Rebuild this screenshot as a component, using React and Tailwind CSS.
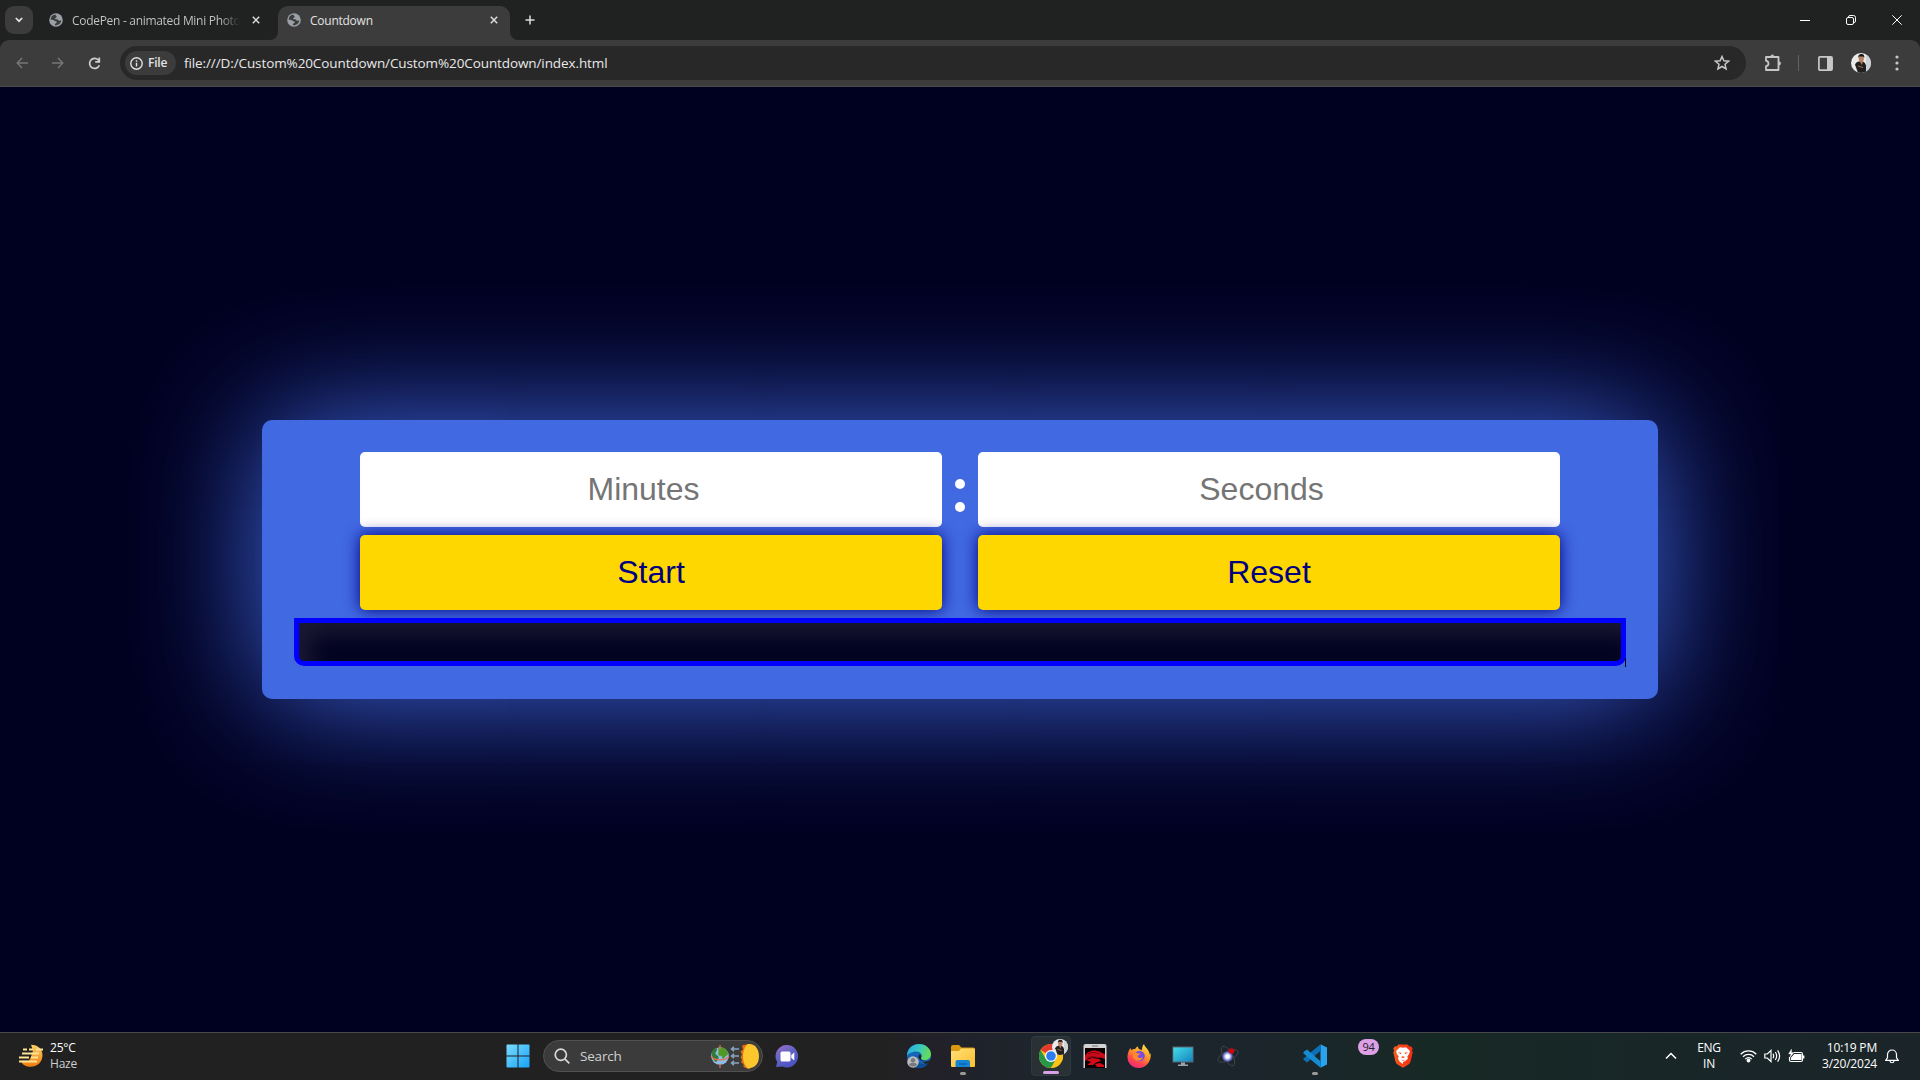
import React from "react";

const Globe = () => (
  <svg width="14" height="14" viewBox="0 0 14 14" className="shrink-0">
    <circle cx="7" cy="7" r="6.8" fill="#9aa0a6" />
    <path d="M6.4 1.6C3.6 1.8 1.7 4 1.6 6.6L4.2 7c1 .3 1.4 1.2 2.6 1.3 1 .1 1.2 1 .6 1.6-.5.5-1.300.4-1.500 1.200l.1 1.200c3.500.3 6-1.900 6.300-4.700-.8-.2-1.200.4-2.200.1C9 7.300 9 6.400 7.800 6.300 6.600 6.200 5.900 6 6 5.200c.1-.7 1.500-.4 1.700-1.300.1-.9-1.300-.9-1.300-2.300z" fill="#3c3c3c" />
  </svg>
);

const Cross = () => (
  <svg width="8" height="8" viewBox="0 0 8 8" className="shrink-0" fill="none" stroke="#dcdcdc" strokeWidth="1.5">
    <path d="M.8.8l6.400 6.400M7.200.8L.8 7.200" />
  </svg>
);

const Avatar = ({ size }) => (
  <svg width={size} height={size} viewBox="0 0 20 20" className="shrink-0">
    <defs>
      <clipPath id="avatarClip"><circle cx="10" cy="10" r="10" /></clipPath>
    </defs>
    <g clipPath="url(#avatarClip)">
      <rect width="20" height="20" fill="#e9eaec" />
      <rect x="15" width="5" height="20" fill="#cfd3d6" />
      <path d="M4 11.500c1-2.500 3-3 5.500-3.300 3 .2 4.500 1 5.500 4.300L15 20H7z" fill="#22211f" />
      <path d="M8.500 8h3.300l-.8 4z" fill="#b98361" />
      <ellipse cx="10.300" cy="5.600" rx="2.600" ry="3.500" fill="#b98361" />
      <path d="M7.400 5C7 1.800 8.800 1 10.600 1s3.200 1.300 2.600 4l-1-1.600H8.300z" fill="#1b1512" />
      <path d="M7 13l5 1.500" stroke="#9a6a4c" strokeWidth="1.200" />
    </g>
  </svg>
);

function TabStrip() {
  return (
    <div className="flex h-10 w-full items-start bg-[#202221]">
      <div className="ml-[5px] mt-1.5 flex h-7 w-7 items-center justify-center rounded-[9px] bg-[#3c3c3c] pl-0 pr-0">
        <svg width="8" height="6" viewBox="0 0 8 6" fill="none" stroke="#e3e3e3" strokeWidth="1.700"><path d="M.8 1L4 4.200 7.200 1" /></svg>
      </div>
      <div className="ml-[16px] flex h-10 w-[229px] items-center">
        <Globe />
        <span className="ml-[9px] mt-px w-[168px] overflow-hidden whitespace-nowrap bg-gradient-to-r from-[#c7c7c7] from-88% to-transparent bg-clip-text text-[12px] leading-4 tracking-[-0.300px] text-transparent">CodePen - animated Mini Photo</span>
        <span className="ml-[12px] flex"><Cross /></span>
      </div>
      <div className="relative mt-1.5 flex h-[34px] w-[232px] items-center rounded-t-[10px] bg-[#3c3c3c] pb-[6px] pl-[9px] pt-0">
        <svg className="absolute -left-2 bottom-0" width="8" height="8"><path d="M8 0v8H0a8 8 0 0 0 8-8z" fill="#3c3c3c" /></svg>
        <svg className="absolute -right-2 bottom-0" width="8" height="8"><path d="M0 0v8h8a8 8 0 0 1-8-8z" fill="#3c3c3c" /></svg>
        <Globe />
        <span className="ml-[9px] mt-[2px] w-[180px] text-[12px] leading-4 tracking-[-0.25px] text-[#e3e3e3]">Countdown</span>
        <Cross />
      </div>
      <svg className="ml-[15px] mt-[15px]" width="10" height="10" viewBox="0 0 10 10" fill="none" stroke="#dcdcdc" strokeWidth="1.500"><path d="M5 .5v9M.5 5h9" /></svg>
      <div className="ml-auto mt-[15px] flex items-center gap-[36px] pr-[18px]">
        <svg width="10" height="10" fill="none" stroke="#fff"><path d="M0 5.500h10" /></svg>
        <svg width="10" height="10" fill="none" stroke="#fff"><rect x=".5" y="2.500" width="7" height="7" rx="1.500" /><path d="M2.500 2Q2.500.5 4 .5h3.500q2 0 2 2V6q0 1.500-1.500 1.500" /></svg>
        <svg width="10" height="10" fill="none" stroke="#fff"><path d="M.3.3l9.400 9.400M9.700.3L.3 9.700" /></svg>
      </div>
    </div>
  );
}

function Toolbar() {
  return (
    <div className="h-[47px] w-full bg-[#202221]">
      <div className="flex h-[47px] w-full items-center rounded-t-[9px] border-b border-[#4a4a4a] bg-[#3c3c3c] pl-4">
        <svg width="13" height="12" viewBox="0 0 13 12" fill="none" stroke="#757575" strokeWidth="1.500"><path d="M12 6H1.500M6 1L1.200 6 6 11" /></svg>
        <svg className="ml-[23px]" width="13" height="12" viewBox="0 0 13 12" fill="none" stroke="#757575" strokeWidth="1.500"><path d="M0 6h10.500M6 1l4.800 5L6 11" /></svg>
        <svg className="ml-[23px]" width="13" height="13" viewBox="0 0 13 13" fill="none" stroke="#d0d0d0" strokeWidth="1.700"><path d="M11.300 8.200A5 5 0 1 1 10.300 3L11.500 4.500" /><path d="M11.300.500v4.300H7.200" /></svg>
        <div className="ml-[19px] flex h-[34px] w-[1626px] items-center rounded-full bg-[#282828] pl-[5px]">
          <div className="flex h-6 w-[51px] shrink-0 items-center rounded-full bg-[#3c3c3c] pl-[5px]">
            <svg width="13" height="13" viewBox="0 0 13 13" fill="none" stroke="#e3e3e3" strokeWidth="1.400"><circle cx="6.500" cy="6.500" r="5.700" /><path d="M6.500 5.800v3.700M6.500 3.300v1.500" /></svg>
            <span className="ml-[5px] text-[12px] font-semibold leading-4 tracking-[-0.2px] text-[#e3e3e3]">File</span>
          </div>
          <span className="ml-[8px] whitespace-nowrap text-[13.500px] leading-5 tracking-[-0.1px] text-[#e8e8e8]">file:///D:/Custom%20Countdown/Custom%20Countdown/index.html</span>
          <svg className="ml-auto mr-4" width="16" height="16" viewBox="0 0 16 16" fill="none" stroke="#c7c7c7" strokeWidth="1.500"><path d="M8 1.500l1.900 4.300 4.700.4L11 9.300l1.100 4.700L8 11.500 3.900 14 5 9.300 1.400 6.200l4.700-.4z" /></svg>
        </div>
        <svg className="ml-[18px]" width="18" height="18" viewBox="0 0 18 18" fill="none" stroke="#c7c7c7" strokeWidth="1.800" strokeLinejoin="round"><path d="M2 3h12.500v13H2v-3.800c3.300-.4 3.300-5 0-5.400z" /><path d="M6.700 2.500a1.600 1.600 0 0 1 3.200 0zM15 7.800a1.600 1.600 0 0 1 0 3.200z" fill="#c7c7c7" strokeWidth=".8" /></svg>
        <div className="ml-[16px] h-4 w-px bg-[#626262]" />
        <svg className="ml-[19px]" width="15" height="15" viewBox="0 0 15 15"><rect x=".9" y=".9" width="13.200" height="13.200" rx="1" fill="none" stroke="#c7c7c7" strokeWidth="1.700" /><path d="M9 1h5v13H9z" fill="#c7c7c7" /></svg>
        <div className="ml-[18px] flex"><Avatar size={20} /></div>
        <svg className="ml-[24px]" width="4" height="16" viewBox="0 0 4 16" fill="#c7c7c7"><circle cx="2" cy="2" r="1.600" /><circle cx="2" cy="8" r="1.600" /><circle cx="2" cy="14" r="1.600" /></svg>
      </div>
    </div>
  );
}

function Timer() {
  return (
    <main className="flex h-[945px] w-full items-start justify-center overflow-hidden bg-[#000020] pt-[333px] font-['Liberation_Sans',Arial,sans-serif] text-[32px]">
      <section className="h-[279px] w-[1396px] rounded-[10px] bg-[#4169e1] px-8 pt-8 shadow-[0_0_128px_#4169e1]">
        <div className="grid grid-cols-[582px_36px_582px] justify-center gap-y-2">
          <div className="flex h-[75px] items-center justify-center rounded-[5px] bg-white pb-[2px] pr-[15px] text-[#757575]">Minutes</div>
          <div className="flex flex-col items-center gap-[13px] pt-[27px]">
            <span className="h-[10px] w-[10px] rounded-full bg-white" />
            <span className="h-[10px] w-[10px] rounded-full bg-white" />
          </div>
          <div className="flex h-[75px] items-center justify-center rounded-[5px] bg-white pb-[2px] pr-[15px] text-[#757575]">Seconds</div>
          <button className="h-[75px] rounded-[5px] bg-[#ffd700] pb-[2px] text-[#000080] shadow-[0_0_16px_#000080]">Start</button>
          <span />
          <button className="h-[75px] rounded-[5px] bg-[#ffd700] pb-[2px] text-[#000080] shadow-[0_0_16px_#000080]">Reset</button>
        </div>
        <div className="relative mt-2 h-12 w-full">
          <div className="h-12 w-full rounded-b-[10px] border-[5px] border-[#0000ff] bg-[#000020] shadow-[inset_12px_12px_24px_#1a1a34]" />
          <span className="absolute -bottom-px right-0 h-[9px] w-px bg-black" />
        </div>
      </section>
    </main>
  );
}

const Slot = ({ w, dot, children }) => (
  <div className={"relative flex h-[47px] shrink-0 items-center justify-center " + w}>
    {children}
    {dot && <span className="absolute bottom-[5px] h-[3px] w-[6px] rounded-full bg-[#9a9a9a]" />}
  </div>
);

const Win = () => (
  <svg width="24" height="24" viewBox="0 0 24 24">
    <defs><linearGradient id="win" x1="0" y1="0" x2="1" y2="1" gradientUnits="objectBoundingBox"><stop stopColor="#7bdcff" /><stop offset="1" stopColor="#17a2f8" /></linearGradient></defs>
    <path d="M1 .5h10.500V11.500H.5V1zM12.500.5H23l.5.5v10.500h-11zM.5 12.500h11v11H1l-.5-.5zM12.500 12.500h11V23l-.5.5H12.500z" fill="url(#win)" />
  </svg>
);

const SearchArt = () => (
  <svg width="52" height="29" viewBox="0 0 52 29">
    <circle cx="10" cy="14" r="8.800" fill="#8ebce4" />
    <path d="M9 5.500c4-1 8 1.500 9 5.500 0 3-2 2-3.500 4.500s-2 1-2.700-1c-.5-1.500-2.300 0-3.300-1.500S9.500 9 8 7z" fill="#4f9a25" />
    <path d="M2.500 9c1.500-2.500 3-3 4.500-2.500.5 2-1 2.500-1.500 4.500s2.500 2 3 4-1.500 4-2.500 5C2.500 17.500 1 12 2.500 9z" fill="#2f7a35" />
    <path d="M1 14.500c4 4.500 14 4.500 18 0M10 3v4.500M10 22v4" stroke="#ee6b4d" strokeWidth="1.200" fill="none" />
    <g stroke="#8aa5c0" strokeWidth="1.500" fill="none"><path d="M22 7h7M22 14h7M22 21h7M24 4.800L21.500 7 24 9.200M24 11.800L21.500 14l2.500 2.200M24 18.800L21.500 21l2.500 2.200" /></g>
    <path d="M38 2l-6 1.500 1 4-2.500 2 1.500 3-1.500 3 1.500 2-1 3 2.500 1.500v3l5 2 2-1V2z" fill="#e86f10" />
    <path d="M38 2c8-.5 11 6 11 12.500S45.500 26 38 26.500c-3.500-2.500-5-7.500-5-12.500s2-10 5-12z" fill="#fcc62d" />
  </svg>
);

const Chat = () => (
  <svg width="24" height="24" viewBox="0 0 24 24">
    <defs><linearGradient id="chat" x1="0" y1="0" x2="0.600" y2="1"><stop stopColor="#a06fc6" /><stop offset=".5" stopColor="#6264c4" /><stop offset="1" stopColor="#4a52c4" /></linearGradient></defs>
    <path d="M12 1a11.200 11.200 0 1 1-4.500 21.500L1 23l1.200-5A11.200 11.200 0 0 1 12 1z" fill="url(#chat)" />
    <rect x="5.500" y="7.500" width="10" height="10" rx="1.500" fill="#fff" /><path d="M16.300 11l3-2.500v8l-3-2.500z" fill="#fff" />
  </svg>
);

const Edge = () => (
  <svg width="26" height="26" viewBox="0 0 26 26">
    <defs>
      <linearGradient id="edgeA" x1="0" y1="0" x2="1" y2=".3"><stop stopColor="#28a8e8" /><stop offset=".5" stopColor="#35c6c6" /><stop offset="1" stopColor="#65da5c" /></linearGradient>
    </defs>
    <circle cx="13" cy="13" r="12" fill="#1565b8" />
    <path d="M16 18.500c3 .5 6 0 9-2v5l-3.500 1z" fill="#222223" />
    <path d="M1 13C1 5 7 1 13 1c7 0 12 5 12 10 0 4-3 6-6.500 6-3 0-4.500-1-3.500-2.500 2-3-1-6-4.500-6C5.500 8.500 1.500 11 1 13z" fill="url(#edgeA)" />
    <path d="M10 12c-2 5 3 9 8 9 2.500 0 4.500-1 5.500-2-3.500 5-9 7-13 5.500C5.500 22 6 14 10 12z" fill="#0c4c92" />
    <path d="M12.500 12.500c1-2 3.500-.5 2.800 1.500-.9 2 0 3.400 3.200 3.700-3 .8-6.800-1.500-6-5.200z" fill="#202124" />
    <circle cx="7" cy="19" r="5.800" fill="#b8babd" /><circle cx="7" cy="17.300" r="2.200" fill="#77797c" /><path d="M3 22c.5-3 7.500-3 8 0q-4 3-8 0z" fill="#77797c" />
  </svg>
);

const Folder = () => (
  <svg width="26" height="24" viewBox="0 0 26 24">
    <defs><linearGradient id="fold" x1="0" y1="0" x2="1" y2="1"><stop stopColor="#ffe07a" /><stop offset="1" stopColor="#fdbf2c" /></linearGradient></defs>
    <path d="M1 3q0-2 2-2h6l2.500 2.500H23q2 0 2 2V9H1z" fill="#d9980f" />
    <path d="M1 7h8l2-2.500h13q1 0 1 1V22q0 1-1 1H2q-1 0-1-1z" fill="url(#fold)" />
    <path d="M5.500 23v-5q0-2 2-2H18q2 0 2 2v5z" fill="#1584d2" /><path d="M9 20h8" stroke="#0a62ae" strokeWidth="1.300" />
  </svg>
);

const Chrome = () => (
  <svg width="24" height="24" viewBox="0 0 24 24">
    <circle cx="12" cy="12" r="12" fill="#fbc116" />
    <path d="M12 12L1.600 6A12 12 0 0 1 22.400 6H12z" fill="#e33b2e" />
    <path d="M1.600 6A12 12 0 0 0 12 24l5.200-9L12 12 6.800 15z" fill="#279847" />
    <path d="M12 24l5.200-9A6 6 0 0 0 17.200 9L16 6h6.400A12 12 0 0 1 12 24z" fill="#fbc116" />
    <circle cx="12" cy="12" r="6" fill="#fff" /><circle cx="12" cy="12" r="4.800" fill="#2e7df0" />
  </svg>
);

const RedPhone = () => (
  <svg width="24" height="24" viewBox="0 0 24 24">
    <rect x=".5" y="0" width="23" height="28" rx="2" fill="#d2d2d2" /><rect x="2" y="4" width="20" height="20" fill="#0c0102" />
    <path d="M2 12c2-4 7-6.500 12-5 4 .5 5 2.500 8 3v5l-4-1.500-4 .5-3-1-5 1-4 3z" fill="#c90a1a" />
    <path d="M3 16l6-2 7 1 2 2-5 1.500-3 2.500H4l4-3zM12 20l5-1 4 2v2h-7z" fill="#d40b1b" />
    <path d="M5 10c4-2 8-2 11 0M4 14c4-2 9-1 12 0" stroke="#7c0610" fill="none" /><path d="M9 2h6" stroke="#777" />
  </svg>
);

const Firefox = () => (
  <svg width="24" height="24" viewBox="0 0 24 24">
    <defs><linearGradient id="ff" x1=".8" y1="0" x2=".3" y2="1"><stop stopColor="#ffe843" /><stop offset=".45" stopColor="#ff9328" /><stop offset=".75" stopColor="#ff4450" /><stop offset="1" stopColor="#ef2b78" /></linearGradient></defs>
    <path d="M3.500 4c.2 1 .6 1.800 1 2.300C6 5 7 5 8 5.200 9 3.500 10 2.800 11 2.500c0 1.500.8 2.500 2 3L15 6c0-2.500.5-4.500 2-6 .5 3 3.500 4 5 8 .5 1 .8 2 .8 3l.7-2C25 17 19 24 12 24 5 24 0 19 .5 12 .8 8.500 2 6 3.500 4z" fill="url(#ff)" />
    <circle cx="12.500" cy="12" r="5.300" fill="#7b4be0" />
    <path d="M6 9c2-1 3-.5 4.500.3 1 .3 2 0 3 .3-.5 1.300-2.500 1.500-3 2.700.5 2 3.500 2.300 5.500 1-1 3-5 4.500-8 2.500-2-1.500-2.500-4-2-6.800z" fill="#ff8a2b" />
  </svg>
);

const Monitor = () => (
  <svg width="22" height="21" viewBox="0 0 22 21">
    <defs><linearGradient id="mon" x1="0" y1="0" x2="1" y2="1"><stop stopColor="#43dce8" /><stop offset="1" stopColor="#1783bd" /></linearGradient></defs>
    <rect x=".5" y=".5" width="21" height="16" fill="#56646f" /><rect x="1.300" y="1.500" width="19.400" height="14" fill="url(#mon)" />
    <path d="M9 16.500h4V18.500h3v1.500H6v-1.500h3z" fill="#9aa3a9" />
  </svg>
);

const Atom = () => (
  <svg width="24" height="24" viewBox="0 0 24 24" fill="none">
    <defs><radialGradient id="core"><stop offset=".3" stopColor="#fff" /><stop offset=".65" stopColor="#8c92de" /><stop offset="1" stopColor="#30376c" /></radialGradient></defs>
    <g stroke="#45494c" strokeWidth=".8"><ellipse cx="12" cy="12" rx="11" ry="4.500" transform="rotate(-25 12 12)" /><ellipse cx="12" cy="12" rx="11" ry="4.500" transform="rotate(60 12 12)" /></g>
    <circle cx="11.500" cy="12.500" r="5.500" fill="url(#core)" /><circle cx="15.500" cy="7" r="2.800" fill="#cf0610" />
  </svg>
);

const Code = () => (
  <svg width="25" height="24" viewBox="0 0 25 24">
    <path d="M17.500.3L24 3.500v17l-6.500 3.200z" fill="#27a3f0" />
    <path d="M17.500.3v6.500L4 18.500.5 15.700v-1.200z" fill="#0a71b8" />
    <path d="M17.500 23.700v-6.500L4 5.500.5 8v1.500z" fill="#168bd2" />
  </svg>
);

const Brave = () => (
  <svg width="20" height="24" viewBox="0 0 20 24">
    <defs><linearGradient id="brave"><stop stopColor="#f8591f" /><stop offset="1" stopColor="#f52e12" /></linearGradient></defs>
    <path d="M5.500.5h9l2 2 1.500-.3 1.700 2.300-.7 2 .7 2-2 8.500c-.5 2-1.500 3-3 4L10 23.800 5.300 21c-1.500-1-2.500-2-3-4l-2-8.500.7-2-.7-2L2 2.200l1.500.3z" fill="url(#brave)" />
    <path d="M10 3.800l3-.6 3.800 3.500-.5 3-2 2.800.7 2-2 2-3 1.600L10 20l-3.500-2.500L5 14.500l.7-2-2-2.800-.5-3L7 3.200z" fill="#fff" />
    <path d="M5 8.200l3.500.6-.8 1.400zM15 8.200l-3.500.6.8 1.400zM8 13l2-.8 2 .8-2 1.300zM7.500 15.800l2.500 1 2.500-1-2.500.1z" fill="#f44a1b" />
  </svg>
);

function Taskbar() {
  return (
    <footer className="flex h-12 w-full items-center border-t border-[#48484a] bg-[linear-gradient(90deg,#212121_0%,#212121_46%,#22212a_49%,#1d252c_54%,#1c252c_65%,#172925_75%,#192628_88%,#1b2529_100%)] pb-px text-[12px] text-white">
      <div className="flex w-[502px] items-center pl-[19px]">
        <svg width="24" height="24" viewBox="0 0 24 24">
          <defs>
            <linearGradient id="haze" x1="0" y1="0" x2="0" y2="1"><stop stopColor="#fbd065" /><stop offset="1" stopColor="#f07b0c" /></linearGradient>
          </defs>
          <path d="M12 .8c7 0 11.500 4.500 11.500 10.500 0 6.500-5 11.500-11.500 11.500-5 0-9-2-10-6h8l2-4 2-6z" fill="url(#haze)" />
          <path d="M4 5.500h4M10 5.500h4M17 5.500h7M3 9.500h17M0 13.500h10M12 13.500h7M0 17.500h18" stroke="#ffe394" strokeWidth="1.900" />
        </svg>
        <div className="ml-[7px] leading-4 tracking-[-0.2px]">
          <div>25°C</div>
          <div className="text-[#cfcfcf]">Haze</div>
        </div>
      </div>
      <div className="flex items-center">
        <Slot w="w-[31px]"><Win /></Slot>
        <div className="ml-[10px] flex h-8 w-[220px] items-center rounded-full border border-[#505050] bg-[#3b3b3b] pl-[10px]">
          <svg width="16" height="16" viewBox="0 0 16 16" fill="none" stroke="#d8d8d8" strokeWidth="1.700"><circle cx="6.800" cy="6.800" r="5.600" /><path d="M10.800 10.800l4.500 4.500" /></svg>
          <span className="ml-[10px] text-[13.500px] tracking-[-0.2px] text-[#d0d0d0]">Search</span>
          <span className="ml-auto mr-0"><SearchArt /></span>
        </div>
        <span className="ml-[12px]"><Chat /></span>
      </div>
      <div className="ml-[98px] flex items-center">
        <Slot w="w-[44px]"><Edge /></Slot>
        <Slot w="w-[44px]" dot><Folder /></Slot>
        <div className="relative ml-[70px] mr-[44px] flex h-10 w-10 items-center justify-center rounded-[4px] border border-[#303a3e] bg-[#293135] -translate-x-[24px]">
          <Chrome />
          <span className="absolute right-[2px] top-[2px] flex"><Avatar size={16} /></span>
          <span className="absolute bottom-[1px] h-[3px] w-4 rounded-full bg-[#d9a0e4]" />
        </div>
      </div>
      <div className="-ml-[68px] flex items-center">
        <Slot w="w-[48px]"><RedPhone /></Slot>
        <Slot w="w-[40px]"><Firefox /></Slot>
        <Slot w="w-[48px]"><Monitor /></Slot>
        <Slot w="w-[42px]"><Atom /></Slot>
        <span className="w-[44px]" />
        <Slot w="w-[44px]" dot><Code /></Slot>
        <span className="mb-[18px] ml-[21px] flex h-4 w-[21px] items-center justify-center rounded-full bg-[#dda0e6] text-[11px] tracking-[-0.3px] text-[#222]">94</span>
        <span className="ml-[14px]"><Brave /></span>
      </div>
      <div className="ml-auto flex items-center leading-4">
        <svg width="12" height="8" viewBox="0 0 12 8" fill="none" stroke="#fff" strokeWidth="1.500"><path d="M1 6.500l5-5 5 5" /></svg>
        <div className="ml-[19px] w-[26px] text-center tracking-[-0.3px]"><div>ENG</div><div>IN</div></div>
        <svg className="ml-[18px]" width="17" height="14" viewBox="0 0 17 14" fill="none" stroke="#fff" strokeWidth="1.300"><path d="M.7 5.200a11 11 0 0 1 15.600 0M3 7.700a7.800 7.800 0 0 1 11 0M5.200 10.100a4.600 4.600 0 0 1 6.600 0" /><circle cx="8.500" cy="11.500" r="1.300" fill="#fff" /></svg>
        <svg className="ml-[7px]" width="17" height="14" viewBox="0 0 17 14" fill="none" stroke="#fff" strokeWidth="1.200"><path d="M.8 5h2.500L7 1.500v11L3.300 9H.8zM9 4.800q1.300 2.200 0 4.400M11.300 3q2.700 4 0 8M13.600 1.300q4 5.700 0 11.400" /></svg>
        <svg className="ml-[7px]" width="17" height="14" viewBox="0 0 17 14" fill="none" stroke="#fff" strokeWidth="1.200"><path d="M6 3.500h7q1.500 0 1.500 1.500v6q0 1.500-1.500 1.500H3q-1.500 0-1.500-1.500V8" /><path d="M6.500 5.500H13v5H3.500V9z" fill="#fff" /><path d="M15.500 6.500v3" strokeWidth="1.800" /><path d="M3.500 0L.5 5H3L1.500 9 6 3.500H3.500z" fill="#fff" strokeWidth=".3" /></svg>
        <div className="ml-[14px] w-[58px] whitespace-nowrap text-right tracking-[-0.2px]"><div>10:19 PM</div><div>3/20/2024</div></div>
        <svg className="ml-[8px] mr-[21px]" width="14" height="16" viewBox="0 0 14 16" fill="none" stroke="#fff" strokeWidth="1.200"><path d="M2.500 6.500a4.500 4.500 0 0 1 9 0v3L13.200 12.400H.8L2.500 9.500zM5 13c.3 2.300 3.700 2.300 4 0" /></svg>
      </div>
    </footer>
  );
}

export default function App() {
  return (
    <div className="flex h-[1080px] w-[1920px] flex-col overflow-hidden bg-[#000020] font-['Open_Sans','Noto_Sans',sans-serif]">
      <TabStrip />
      <Toolbar />
      <Timer />
      <Taskbar />
    </div>
  );
}
